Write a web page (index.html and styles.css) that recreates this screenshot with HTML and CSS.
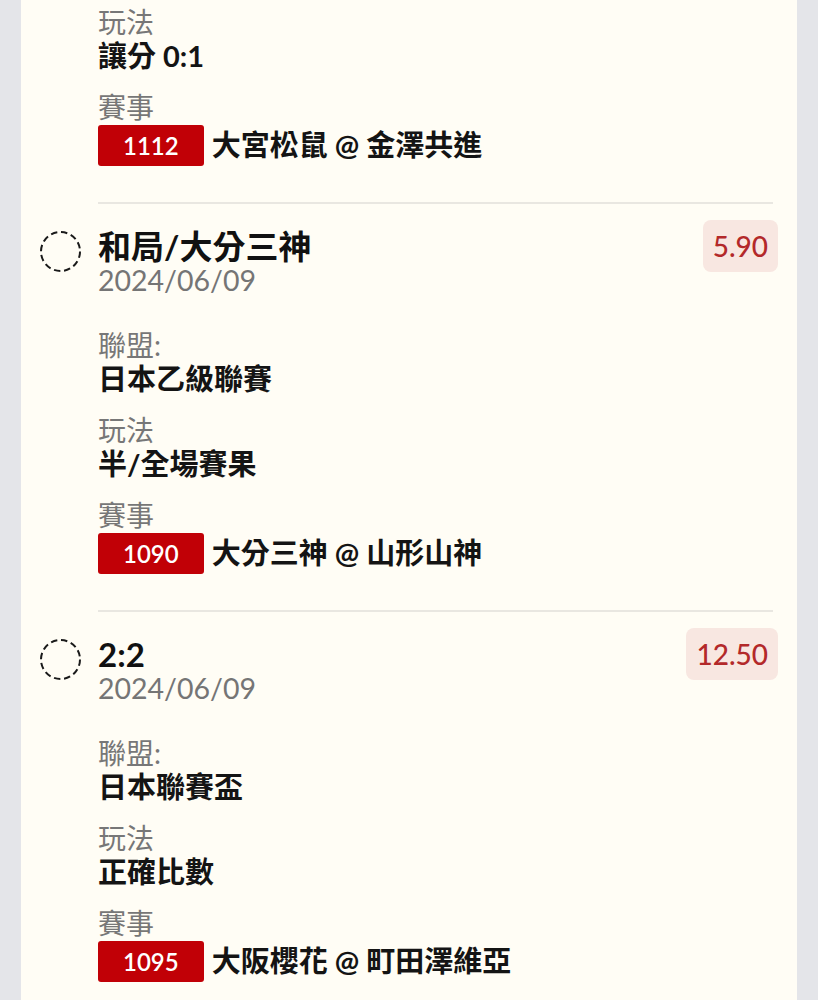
FILE: index.html
```html
<!DOCTYPE html>
<html lang="zh-Hant">
<head>
  <meta charset="UTF-8" />
  <meta name="viewport" content="width=device-width, initial-scale=1" />
  <title>投注紀錄</title>
  <link rel="stylesheet" href="styles.css">
</head>
<body>

<main class="card">

  <!-- 上一筆（已捲出畫面的部分） -->
  <section class="bet">
    <div class="bet-mark"></div>
    <div class="bet-body bet-body--cut">
      <dl class="fields">
        <div class="field"><dt>玩法</dt><dd>讓分 0:1</dd></div>
        <div class="field">
          <dt>賽事</dt>
          <dd class="match"><span class="match-no">1112</span>大宮松鼠 @ 金澤共進</dd>
        </div>
      </dl>
    </div>
  </section>

  <section class="bet">
    <div class="bet-mark">
      <svg class="pending" width="41" height="41" viewBox="0 0 41 41" aria-label="未開獎">
        <circle cx="20.5" cy="20.5" r="19.5" />
      </svg>
    </div>
    <div class="bet-body">
      <div class="bet-head">
        <div>
          <div class="bet-title">和局/大分三神</div>
          <div class="bet-date">2024/06/09</div>
        </div>
        <span class="odds">5.90</span>
      </div>
      <dl class="fields">
        <div class="field"><dt>聯盟:</dt><dd>日本乙級聯賽</dd></div>
        <div class="field"><dt>玩法</dt><dd>半/全場賽果</dd></div>
        <div class="field">
          <dt>賽事</dt>
          <dd class="match"><span class="match-no">1090</span>大分三神 @ 山形山神</dd>
        </div>
      </dl>
    </div>
  </section>

  <section class="bet">
    <div class="bet-mark">
      <svg class="pending" width="41" height="41" viewBox="0 0 41 41" aria-label="未開獎">
        <circle cx="20.5" cy="20.5" r="19.5" />
      </svg>
    </div>
    <div class="bet-body">
      <div class="bet-head">
        <div>
          <div class="bet-title">2:2</div>
          <div class="bet-date">2024/06/09</div>
        </div>
        <span class="odds">12.50</span>
      </div>
      <dl class="fields">
        <div class="field"><dt>聯盟:</dt><dd>日本聯賽盃</dd></div>
        <div class="field"><dt>玩法</dt><dd>正確比數</dd></div>
        <div class="field">
          <dt>賽事</dt>
          <dd class="match"><span class="match-no">1095</span>大阪櫻花 @ 町田澤維亞</dd>
        </div>
      </dl>
    </div>
  </section>

</main>

</body>
</html>
```

FILE: styles.css
```css
body {
  margin: 0; background: #e4e5e9; color: #141414;
  font-family: 'Lato', 'Noto Sans CJK TC', sans-serif;
}
.card {
  margin: 0 21px; min-height: 100vh;
  background: #fffdf5; padding: 0 24px 0 19px;
}
.bet { display: flex; }
.bet-mark { width: 58px; flex: none; }
.pending { display: block; margin-top: 29px; }
.pending circle {
  fill: none; stroke: #1a1a1a; stroke-width: 2;
  stroke-dasharray: 6.4 3.8;
}
.bet-body {
  flex: 1; border-top: 2px solid #e9e7e1;
  padding: 22px 0 36px;
}
.bet-body--cut { border-top: none; padding-top: 5px; }
.bet-head {
  display: flex; justify-content: space-between; align-items: flex-start;
  margin-bottom: 34px;
}
.bet-title {
  font-size: 33px; line-height: 40px; font-weight: 700; color: #111;
}
.bet-date {
  font-size: 28.5px; line-height: 28px; color: #757575;
}
.odds {
  margin: -6px -5px 0 0; padding: 0 10px;
  height: 52px; line-height: 52px; border-radius: 8px;
  background: #f8e7e1; color: #b3292a; font-size: 28px; font-weight: 500;
}
/* Detalles */
.fields {
  margin: 0; display: flex; flex-direction: column; gap: 17px;
}
.field dt {
  font-size: 28px; line-height: 34px; color: #777;
}
.field dd {
  margin: 0; font-size: 29px; line-height: 34px; font-weight: 700; color: #141414;
}
.field dd.match {
  display: flex; align-items: center; gap: 8px; height: 42px;
}
.match-no {
  height: 41px; line-height: 41px; padding: 0 25px;
  background: #c10006; color: #fff; border-radius: 3px;
  font-size: 24px; font-weight: 600;
}
```
